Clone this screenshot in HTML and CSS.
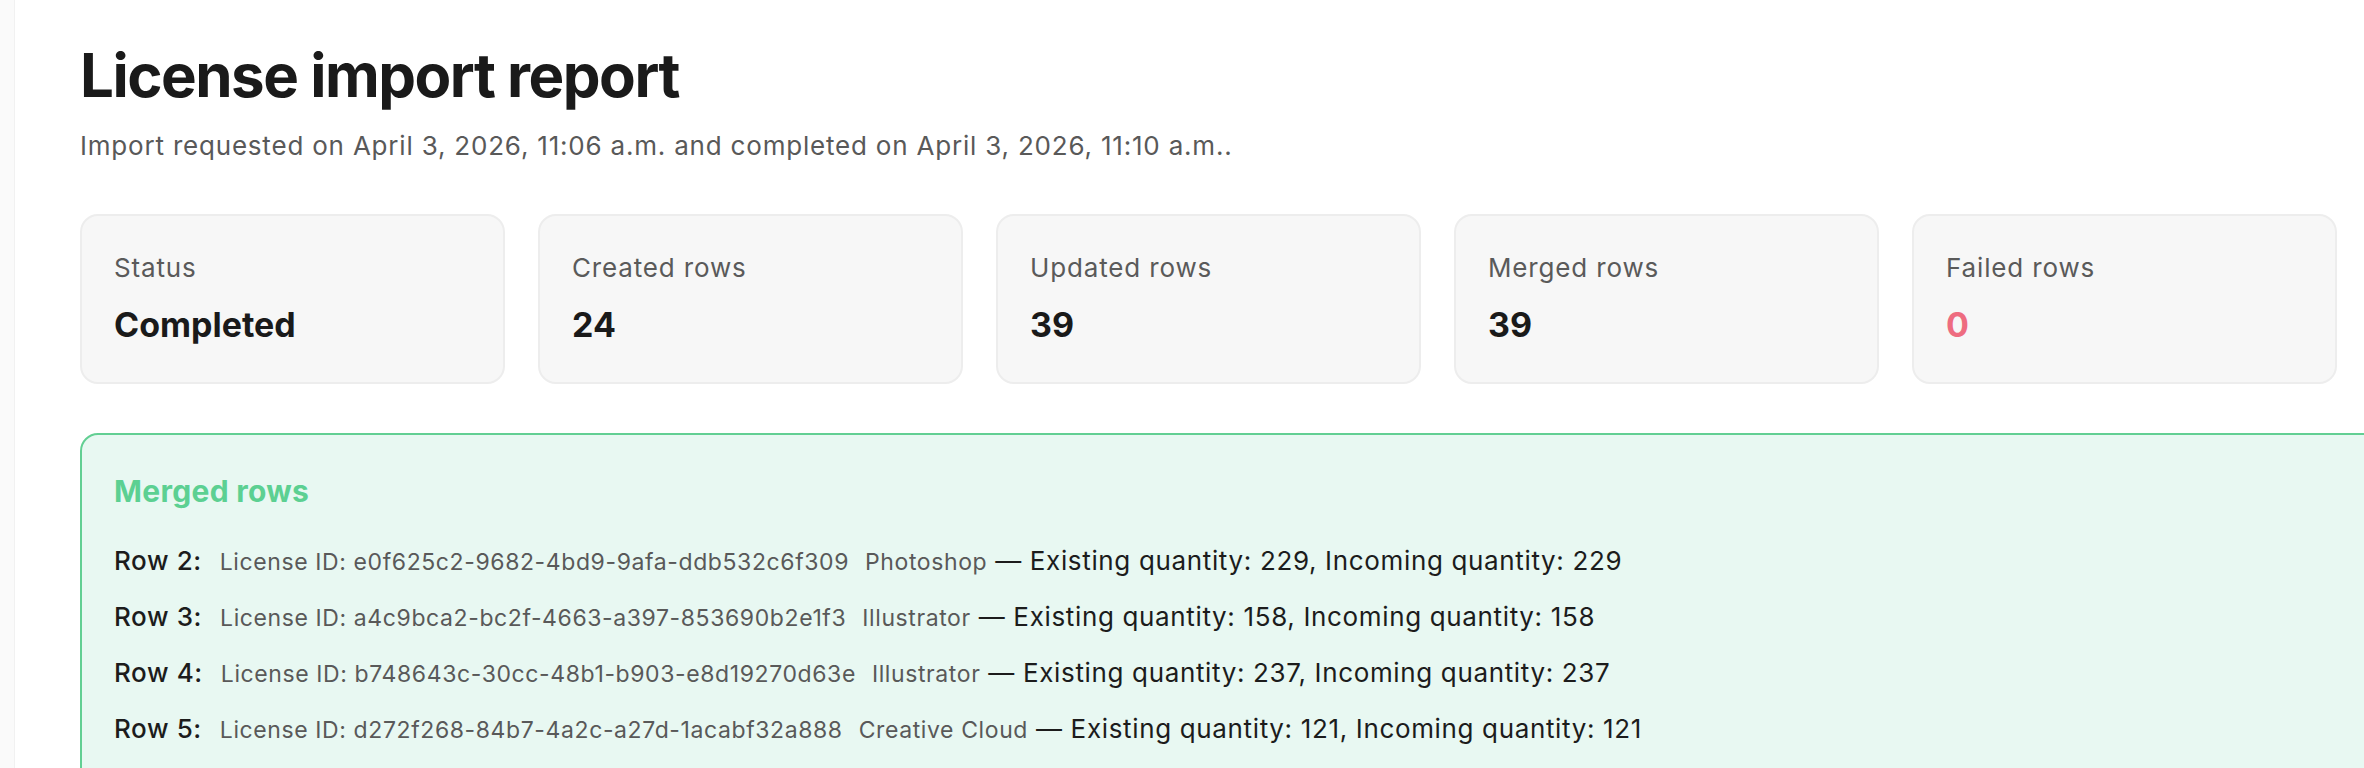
FILE: index.html
```html
<!DOCTYPE html>
<html lang="en">
<head>
<meta charset="utf-8">
<title>License import report</title>
<link rel="stylesheet" href="styles.css">
</head>
<body>
<div class="layout">
  <aside class="rail"></aside>
  <main class="main">
    <h1 class="title">License import report</h1>
    <p class="subtitle">Import requested on April 3, 2026, 11:06 a.m. and completed on April 3, 2026, 11:10 a.m..</p>

    <div class="stats">
      <div class="card">
        <div class="card-label">Status</div>
        <div class="card-value">Completed</div>
      </div>
      <div class="card">
        <div class="card-label">Created rows</div>
        <div class="card-value">24</div>
      </div>
      <div class="card">
        <div class="card-label">Updated rows</div>
        <div class="card-value">39</div>
      </div>
      <div class="card">
        <div class="card-label">Merged rows</div>
        <div class="card-value">39</div>
      </div>
      <div class="card">
        <div class="card-label">Failed rows</div>
        <div class="card-value failed">0</div>
      </div>
    </div>

    <section class="merged">
      <h2 class="merged-title">Merged rows</h2>
      <ul class="rows">
        <li class="row"><span class="row-no">Row 2:</span><span class="meta">License ID: e0f625c2-9682-4bd9-9afa-ddb532c6f309</span><span class="meta product">Photoshop</span> — Existing quantity: 229, Incoming quantity: 229</li>
        <li class="row"><span class="row-no">Row 3:</span><span class="meta">License ID: a4c9bca2-bc2f-4663-a397-853690b2e1f3</span><span class="meta product">Illustrator</span> — Existing quantity: 158, Incoming quantity: 158</li>
        <li class="row"><span class="row-no">Row 4:</span><span class="meta">License ID: b748643c-30cc-48b1-b903-e8d19270d63e</span><span class="meta product">Illustrator</span> — Existing quantity: 237, Incoming quantity: 237</li>
        <li class="row"><span class="row-no">Row 5:</span><span class="meta">License ID: d272f268-84b7-4a2c-a27d-1acabf32a888</span><span class="meta product">Creative Cloud</span> — Existing quantity: 121, Incoming quantity: 121</li>
      </ul>
    </section>
  </main>
</div>
</body>
</html>
```

FILE: styles.css
```css
html, body {
  margin: 0;
  padding: 0;
  background: #ffffff;
  overflow: hidden;
}

body {
  font-family: Inter, "Noto Sans", "Liberation Sans", sans-serif;
  color: #1b1b1b;
}

.layout {
  display: flex;
  min-height: 768px;
}

.rail {
  flex: 0 0 14px;
  background: #fafafa;
  border-right: 1px solid #f1f1f1;
}

.main {
  flex: 1;
  min-width: 0;
  padding: 39px 27px 0 65px;
}

.title {
  margin: 0;
  font-size: 60px;
  line-height: 72px;
  font-weight: 700;
  letter-spacing: -1.5px;
  color: #1a1a1a;
}

.subtitle {
  margin: 20px 0 0;
  font-size: 26px;
  line-height: 30px;
  letter-spacing: 0.8px;
  color: #595959;
}

.stats {
  display: grid;
  grid-template-columns: repeat(5, 1fr);
  gap: 33px;
  margin-top: 53px;
}

.card {
  background: #f7f7f7;
  border: 2px solid #ededed;
  border-radius: 18px;
  padding: 37px 32px 37px;
}

.card-label {
  font-size: 26px;
  line-height: 30px;
  letter-spacing: 0.85px;
  color: #5a5a5a;
}

.card-value {
  margin-top: 21px;
  font-size: 34px;
  line-height: 41px;
  font-weight: 700;
  color: #1a1a1a;
}

.card-value.failed {
  color: #ee6c80;
}

.merged {
  margin-top: 49px;
  margin-right: -120px;
  background: #e8f8f2;
  border: 2px solid #62cf93;
  border-radius: 18px;
  padding: 38px 32px 40px;
}

.merged-title {
  margin: 0;
  font-size: 30px;
  line-height: 36px;
  font-weight: 700;
  letter-spacing: 0.3px;
  color: #5cd092;
}

.rows {
  list-style: none;
  margin: 34px 0 0;
  padding: 0;
}

.row {
  font-size: 26px;
  line-height: 36px;
  letter-spacing: 0.65px;
  color: #1c1c1c;
  white-space: nowrap;
}

.row + .row {
  margin-top: 19px;
}

.row-no {
  font-weight: 500;
  letter-spacing: 0.6px;
  margin-right: 18px;
}

.meta {
  font-size: 23px;
  letter-spacing: 0.6px;
  color: #595959;
}

.meta.product {
  margin-left: 16px;
}
```
